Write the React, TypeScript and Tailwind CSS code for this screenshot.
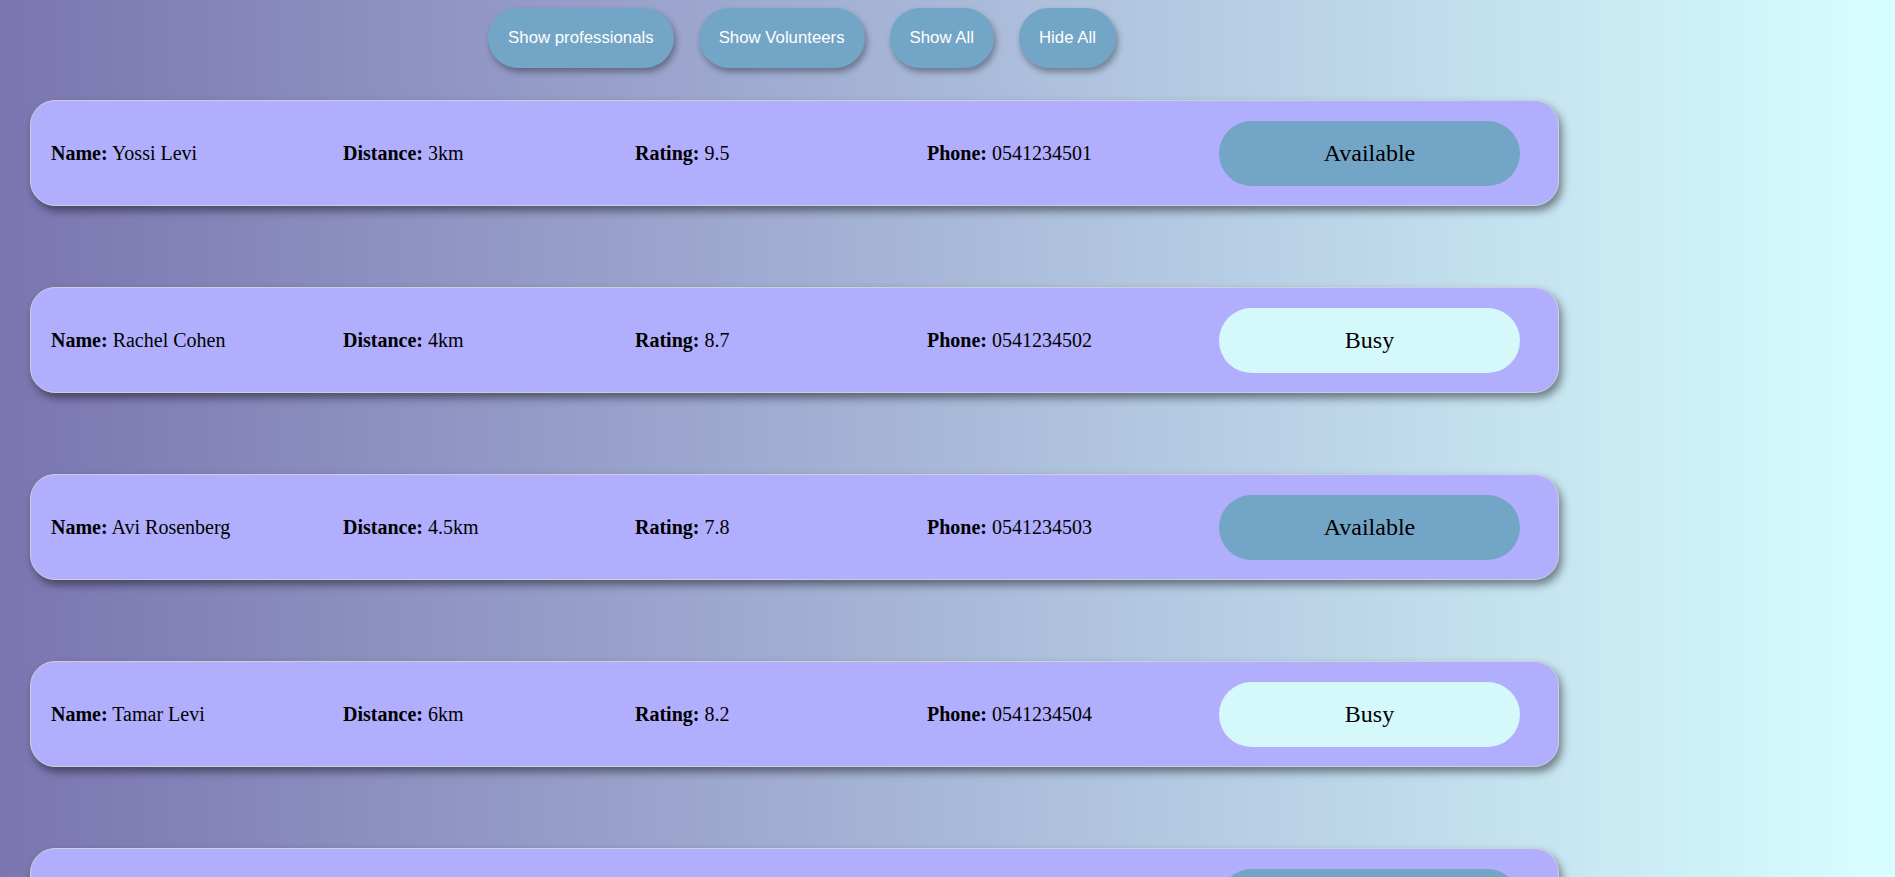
type Person = {
  name: string;
  distance: string;
  rating: string;
  phone: string;
  available: boolean;
};

const people: Person[] = [
  { name: "Yossi Levi", distance: "3km", rating: "9.5", phone: "0541234501", available: true },
  { name: "Rachel Cohen", distance: "4km", rating: "8.7", phone: "0541234502", available: false },
  { name: "Avi Rosenberg", distance: "4.5km", rating: "7.8", phone: "0541234503", available: true },
  { name: "Tamar Levi", distance: "6km", rating: "8.2", phone: "0541234504", available: false },
  { name: "David Mizrahi", distance: "7km", rating: "9.1", phone: "0541234505", available: true },
];

const filters = ["Show professionals", "Show Volunteers", "Show All", "Hide All"];

function Field({ label, value }: { label: string; value: string }) {
  return (
    <div className="whitespace-nowrap">
      <b>{label}:</b> {value}
    </div>
  );
}

function PersonCard({ p }: { p: Person }) {
  return (
    <div className="w-[1529px] h-[106px] shrink-0 rounded-[25px] border border-[#cfcfd8] bg-[#b1affd] shadow-[3px_5px_8px_rgba(0,0,0,0.45)] grid grid-cols-[292px_292px_292px_292px_301px] items-center pl-[20px] text-[20px] text-black">
      <Field label="Name" value={p.name} />
      <Field label="Distance" value={p.distance} />
      <Field label="Rating" value={p.rating} />
      <Field label="Phone" value={p.phone} />
      <button
        className={
          p.available
            ? "h-[65px] w-[301px] rounded-full bg-[#73a5c6] text-[24px] text-black"
            : "h-[65px] w-[301px] rounded-full bg-[#d5f8fa] text-[24px] text-black"
        }
      >
        {p.available ? "Available" : "Busy"}
      </button>
    </div>
  );
}

export default function App() {
  return (
    <div className="min-h-screen w-full bg-gradient-to-r from-[#7b75b0] to-[#d8ffff] font-['Liberation_Serif',serif] overflow-hidden">
      {/* filter buttons */}
      <div className="w-[1604px] flex justify-center gap-[25px] pt-[8px]">
        {filters.map((f) => (
          <button
            key={f}
            className="h-[60px] px-[20px] rounded-full bg-[#73a5c6] text-white text-[16.8px] font-['Liberation_Sans',Arial,sans-serif] shadow-[2px_4px_6px_rgba(0,0,0,0.35)]"
          >
            {f}
          </button>
        ))}
      </div>

      {/* people list */}
      <div className="flex flex-col gap-[81px] pl-[30px] pt-[32px] pb-[40px]">
        {people.map((p) => (
          <PersonCard key={p.phone} p={p} />
        ))}
      </div>
    </div>
  );
}
